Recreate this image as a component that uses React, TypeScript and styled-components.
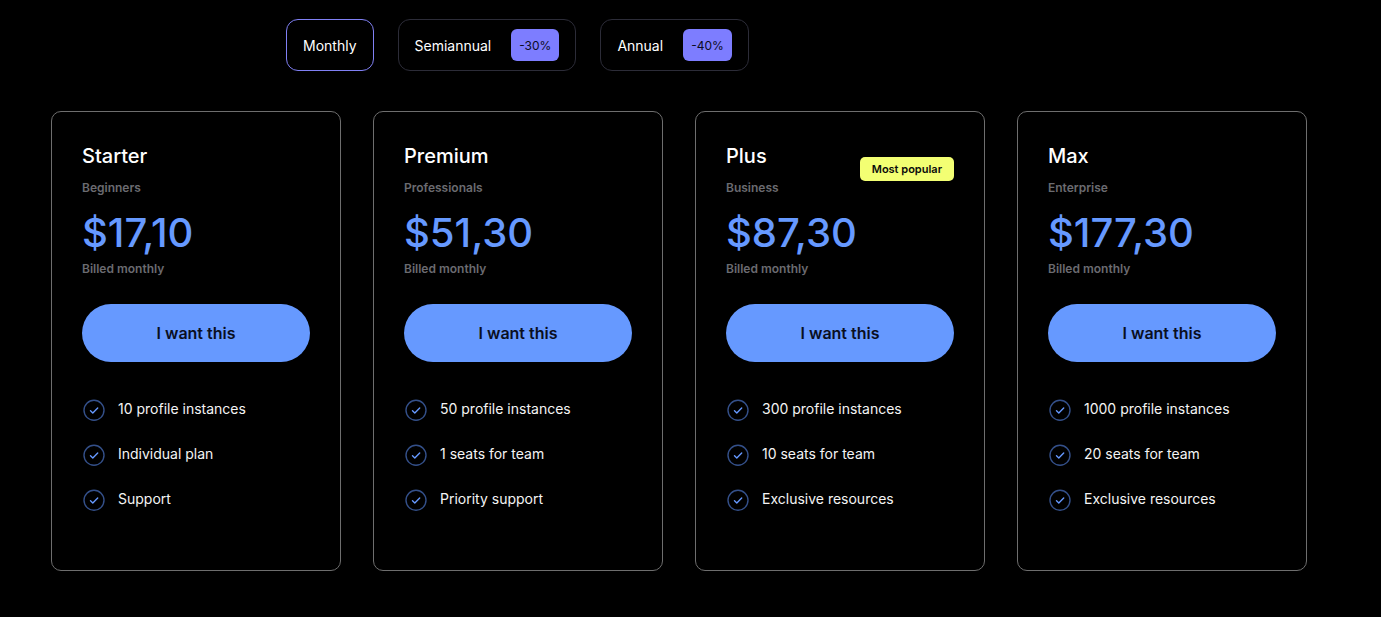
import { useState } from 'react';
import styled, { createGlobalStyle } from 'styled-components';

const GlobalStyle = createGlobalStyle`
  * {
    box-sizing: border-box;
  }
  body {
    margin: 0;
    background: #000;
    color: #fff;
    font-family: Inter, "Liberation Sans", sans-serif;
  }
`;

const Page = styled.main`
  display: flex;
  flex-direction: column;
  gap: 40px;
  padding: 19px 74px 46px 51px;
`;

const Periods = styled.div`
  display: flex;
  flex-wrap: wrap;
  gap: 24px;
  padding-left: 235px;

  @media (max-width: 1000px) {
    padding-left: 0;
  }
`;

const PeriodButton = styled.button<{ $active: boolean }>`
  display: flex;
  align-items: center;
  gap: 20px;
  height: 52px;
  padding: 0 16px;
  border: 1px solid ${({ $active }) => ($active ? '#8080f4' : '#2c2c38')};
  border-radius: 12px;
  background: transparent;
  color: #fff;
  font: 400 14px/21px Inter, "Liberation Sans", sans-serif;
  cursor: pointer;
`;

const Discount = styled.span`
  padding: 6px 8px 5px;
  border-radius: 6px;
  background: #7d7dff;
  color: #0c0c24;
  font-size: 12px;
  font-weight: 400;
`;

const Plans = styled.div`
  display: grid;
  grid-template-columns: repeat(4, 1fr);
  gap: 32px;

  @media (max-width: 1100px) {
    grid-template-columns: repeat(auto-fit, minmax(260px, 1fr));
  }
`;

const Card = styled.article`
  padding: 30px 30px 58px;
  border: 1px solid #6e6e6e;
  border-radius: 10px;
`;

const CardHeader = styled.header`
  display: flex;
  align-items: center;
  justify-content: space-between;
`;

const PlanName = styled.h2`
  margin: 0 0 10px;
  font-size: 20px;
  font-weight: 500;
  line-height: 28px;
`;

const Note = styled.p`
  margin: 0;
  color: #6b6b70;
  font-size: 12px;
  font-weight: 600;
  line-height: 16px;
`;

const PopularBadge = styled.span`
  padding: 4px 12px;
  border-radius: 5px;
  background: #f3ff73;
  color: #0a0a0a;
  font-size: 11px;
  font-weight: 600;
  line-height: 16px;
`;

const Price = styled.p`
  margin: 13px 0 4px;
  color: #6699ff;
  font-size: 40px;
  font-weight: 500;
  line-height: 48px;
`;

const BuyButton = styled.button`
  display: block;
  width: 100%;
  height: 58px;
  margin: 27px 0 36px;
  border: 0;
  border-radius: 29px;
  background: #6699ff;
  color: #0a0f1f;
  font: 600 16px/24px Inter, "Liberation Sans", sans-serif;
  cursor: pointer;
`;

const Features = styled.ul`
  display: flex;
  flex-direction: column;
  gap: 21px;
  margin: 0;
  padding: 0;
  list-style: none;
`;

const Feature = styled.li`
  display: flex;
  gap: 12px;
  color: #f4f4f4;
  font-size: 14px;
  font-weight: 400;
  line-height: 22px;
`;

const CheckIcon = () => (
  <svg width="24" height="24" viewBox="0 0 24 24" fill="none" aria-hidden="true">
    <circle cx="12" cy="12.3" r="10" stroke="#34508a" strokeWidth="1.4" />
    <path
      d="M8.5 12.7l2.3 2.2 4.9-4.8"
      stroke="#6699ff"
      strokeWidth="1.4"
      strokeLinecap="round"
      strokeLinejoin="round"
    />
  </svg>
);

const periods = [
  { name: 'Monthly' },
  { name: 'Semiannual', discount: '-30%' },
  { name: 'Annual', discount: '-40%' },
];

const plans = [
  {
    name: 'Starter',
    audience: 'Beginners',
    price: '$17,10',
    features: ['10 profile instances', 'Individual plan', 'Support'],
  },
  {
    name: 'Premium',
    audience: 'Professionals',
    price: '$51,30',
    features: ['50 profile instances', '1 seats for team', 'Priority support'],
  },
  {
    name: 'Plus',
    audience: 'Business',
    price: '$87,30',
    popular: true,
    features: ['300 profile instances', '10 seats for team', 'Exclusive resources'],
  },
  {
    name: 'Max',
    audience: 'Enterprise',
    price: '$177,30',
    features: ['1000 profile instances', '20 seats for team', 'Exclusive resources'],
  },
];

export default function App() {
  const [period, setPeriod] = useState('Monthly');

  return (
    <>
      <GlobalStyle />
      <Page>
        <Periods role="group" aria-label="Billing period">
          {periods.map(({ name, discount }) => (
            <PeriodButton
              key={name}
              type="button"
              $active={period === name}
              aria-pressed={period === name}
              onClick={() => setPeriod(name)}
            >
              {name}
              {discount && <Discount>{discount}</Discount>}
            </PeriodButton>
          ))}
        </Periods>
        <Plans>
          {plans.map((plan) => (
            <Card key={plan.name}>
              <CardHeader>
                <div>
                  <PlanName>{plan.name}</PlanName>
                  <Note>{plan.audience}</Note>
                </div>
                {plan.popular && <PopularBadge>Most popular</PopularBadge>}
              </CardHeader>
              <Price>{plan.price}</Price>
              <Note>Billed monthly</Note>
              <BuyButton type="button">I want this</BuyButton>
              <Features>
                {plan.features.map((feature) => (
                  <Feature key={feature}>
                    <CheckIcon />
                    {feature}
                  </Feature>
                ))}
              </Features>
            </Card>
          ))}
        </Plans>
      </Page>
    </>
  );
}
